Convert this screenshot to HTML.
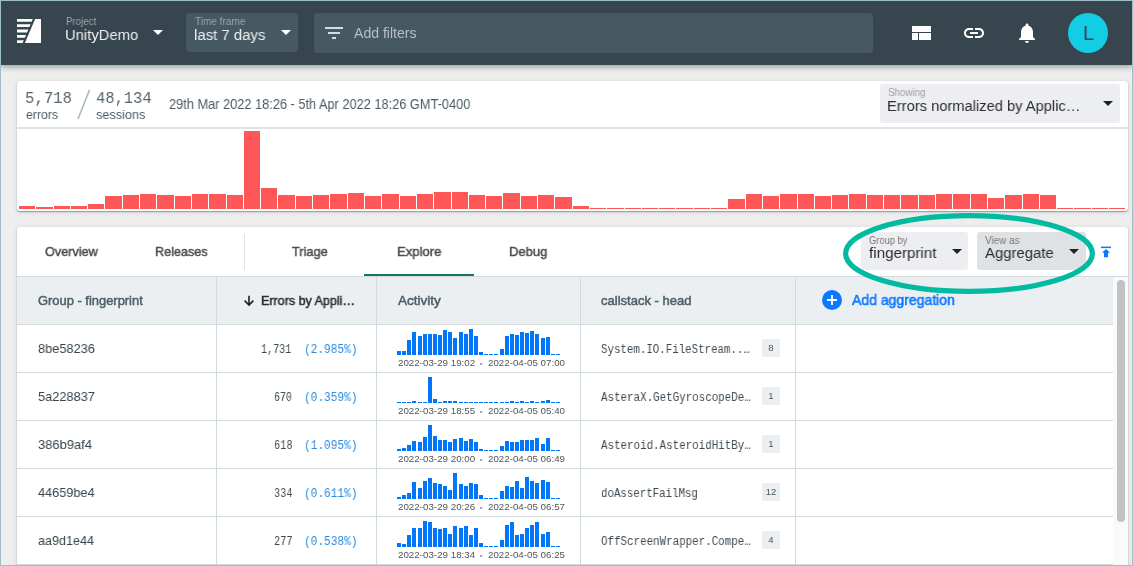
<!DOCTYPE html><html><head><meta charset="utf-8"><style>
*{margin:0;padding:0;box-sizing:border-box}
html,body{width:1133px;height:566px;overflow:hidden;background:#eeeeee;font-family:"Liberation Sans",sans-serif}
.abs{position:absolute}
.frame{position:absolute;left:0;top:0;width:1133px;height:566px;border:1px solid #9fbccb;pointer-events:none;z-index:50}
.hdr{position:absolute;left:0;top:0;width:1133px;height:65px;background:#37454e;box-shadow:0 2px 6px rgba(0,0,0,.35);z-index:5}
.hbox{position:absolute;top:13px;height:39px;background:#465862;border-radius:4px}
.tri{position:absolute;width:0;height:0;border-left:5px solid transparent;border-right:5px solid transparent;border-top:5px solid #fff}
.card{position:absolute;background:#fff;border-radius:3px;box-shadow:0 1px 1.2px rgba(0,0,0,.32),0 1px 5px rgba(0,0,0,.12)}
.t{position:absolute;white-space:nowrap;z-index:6;will-change:transform}
</style></head><body>
<div class="hdr">
<svg class="abs" style="left:17px;top:19px" width="24" height="24" viewBox="0 0 24 24" fill="#fff"><polygon points="18.1,0 24,0 24,24 7.9,24"/><polygon points="0,0 15.80,0 14.61,2.80 0,2.80"/><polygon points="0,5.3 13.55,5.3 12.36,8.10 0,8.10"/><polygon points="0,10.6 11.30,10.6 10.11,13.40 0,13.40"/><polygon points="0,15.9 9.04,15.9 7.85,18.70 0,18.70"/><polygon points="0,21.2 6.79,21.2 5.60,24.00 0,24.00"/></svg>
<div class="tri" style="left:153px;top:30px"></div>
<div class="hbox" style="left:186px;width:112px"></div>
<div class="tri" style="left:281px;top:30px"></div>
<div class="hbox" style="left:314px;width:559px;height:40px"></div>
<svg class="abs" style="left:325px;top:27px" width="18" height="12" fill="#d5dcdf"><rect x="0" y="0" width="18" height="2"/><rect x="3" y="5" width="12" height="2"/><rect x="7" y="10" width="4" height="2"/></svg>
<svg class="abs" style="left:912px;top:26px" width="19" height="14" fill="#fff"><rect x="0" y="0" width="19" height="6"/><rect x="0" y="7" width="6" height="7"/><rect x="7" y="7" width="12" height="7"/></svg>
<svg class="abs" style="left:962px;top:21px" width="24" height="24" viewBox="0 0 24 24" fill="#fff"><path d="M3.9 12c0-1.710 1.39-3.1 3.1-3.1h4V7H7c-2.76 0-5 2.24-5 5s2.24 5 5 5h4v-1.9H7c-1.71 0-3.1-1.39-3.1-3.1zM8 13h8v-2H8v2zm9-6h-4v1.9h4c1.71 0 3.1 1.39 3.1 3.1s-1.39 3.1-3.1 3.1h-4V17h4c2.76 0 5-2.24 5-5s-2.24-5-5-5z"/></svg>
<svg class="abs" style="left:1015px;top:21px" width="24" height="24" viewBox="0 0 24 24" fill="#fff"><path d="M12 22c1.1 0 2-.9 2-2h-4c0 1.1.89 2 2 2zm6-6v-5c0-3.07-1.64-5.64-4.5-6.32V4c0-.83-.67-1.5-1.5-1.5s-1.5.67-1.5 1.5v.68C7.630 5.36 6 7.92 6 11v5l-2 2v1h16v-1l-2-2z"/></svg>
<div class="abs" style="left:1068px;top:13px;width:40px;height:40px;border-radius:50%;background:#13cde5"></div>
</div>
<div class="card" style="left:17px;top:81px;width:1111px;height:130px"></div>
<div class="abs" style="left:17px;top:127px;width:1111px;height:2px;background:#e3e3e3"></div>
<svg class="abs" style="left:76px;top:89px" width="16" height="32"><line x1="13.5" y1="1" x2="2" y2="30" stroke="#a9b9c1" stroke-width="1.6"/></svg>
<div class="abs" style="left:880px;top:84px;width:240px;height:39px;background:#eceef1;border-radius:3px"></div>
<div class="tri" style="left:1103px;top:101px;border-top-color:#222"></div>
<svg class="abs" style="left:0;top:0" width="1133" height="215" fill="#ff5757"><rect x="19" y="206" width="16" height="3"/><rect x="36" y="207" width="17" height="2"/><rect x="54" y="206" width="16" height="3"/><rect x="71" y="206" width="16" height="3"/><rect x="88" y="204" width="16" height="5"/><rect x="105" y="196" width="17" height="13"/><rect x="123" y="195" width="16" height="14"/><rect x="140" y="194" width="16" height="15"/><rect x="157" y="195" width="17" height="14"/><rect x="175" y="196" width="16" height="13"/><rect x="192" y="194" width="16" height="15"/><rect x="209" y="194" width="17" height="15"/><rect x="227" y="195" width="16" height="14"/><rect x="244" y="131" width="16" height="78"/><rect x="261" y="188" width="16" height="21"/><rect x="278" y="195" width="17" height="14"/><rect x="296" y="196" width="16" height="13"/><rect x="313" y="195" width="16" height="14"/><rect x="330" y="194" width="17" height="15"/><rect x="348" y="193" width="16" height="16"/><rect x="365" y="196" width="16" height="13"/><rect x="382" y="194" width="17" height="15"/><rect x="400" y="196" width="16" height="13"/><rect x="417" y="194" width="16" height="15"/><rect x="434" y="192" width="17" height="17"/><rect x="452" y="192" width="16" height="17"/><rect x="469" y="195" width="16" height="14"/><rect x="486" y="196" width="16" height="13"/><rect x="503" y="193" width="17" height="16"/><rect x="521" y="196" width="16" height="13"/><rect x="538" y="195" width="16" height="14"/><rect x="555" y="197" width="17" height="12"/><rect x="573" y="206" width="16" height="3"/><rect x="590" y="208" width="16" height="1"/><rect x="607" y="208" width="17" height="1"/><rect x="625" y="208" width="16" height="1"/><rect x="642" y="208" width="16" height="1"/><rect x="659" y="208" width="16" height="1"/><rect x="676" y="208" width="17" height="1"/><rect x="694" y="208" width="16" height="1"/><rect x="711" y="208" width="16" height="1"/><rect x="728" y="199" width="17" height="10"/><rect x="746" y="194" width="16" height="15"/><rect x="763" y="196" width="16" height="13"/><rect x="780" y="194" width="17" height="15"/><rect x="798" y="194" width="16" height="15"/><rect x="815" y="196" width="16" height="13"/><rect x="832" y="195" width="16" height="14"/><rect x="849" y="194" width="17" height="15"/><rect x="867" y="195" width="16" height="14"/><rect x="884" y="195" width="16" height="14"/><rect x="901" y="195" width="17" height="14"/><rect x="919" y="195" width="16" height="14"/><rect x="936" y="194" width="16" height="15"/><rect x="953" y="194" width="17" height="15"/><rect x="971" y="194" width="16" height="15"/><rect x="988" y="198" width="16" height="11"/><rect x="1005" y="195" width="17" height="14"/><rect x="1023" y="194" width="16" height="15"/><rect x="1040" y="195" width="16" height="14"/><rect x="1057" y="208" width="16" height="1"/><rect x="1074" y="208" width="17" height="1"/><rect x="1092" y="208" width="16" height="1"/><rect x="1109" y="208" width="16" height="1"/></svg>
<div class="card" style="left:17px;top:227px;width:1111px;height:400px"></div>
<div class="abs" style="left:244px;top:234px;width:1px;height:36px;background:#e3e3e3"></div>
<div class="abs" style="left:364px;top:274px;width:110px;height:2px;background:#187a5c"></div>
<div class="abs" style="left:861px;top:232px;width:107px;height:38px;background:#eceef1;border-radius:3px"></div>
<div class="tri" style="left:952px;top:249px;border-top-color:#222"></div>
<div class="abs" style="left:977px;top:232px;width:109px;height:38px;background:#dfe2e5;border-radius:3px"></div>
<div class="tri" style="left:1069px;top:249px;border-top-color:#222"></div>
<svg class="abs" style="left:1100px;top:245px" width="12" height="14" viewBox="0 0 12 14" fill="#0a78ff"><rect x="1" y="1.6" width="10" height="1.5"/><polygon points="6,3.9 2,7.8 4,7.8 4,12.2 8,12.2 8,7.8 10,7.8"/></svg>
<div class="abs" style="left:17px;top:276px;width:1111px;height:1px;background:#d3dade"></div>
<div class="abs" style="left:17px;top:277px;width:1096px;height:47px;background:#eceff1"></div>
<div class="abs" style="left:1113px;top:277px;width:15px;height:290px;background:#fafafa"></div>
<div class="abs" style="left:1117px;top:280px;width:8px;height:242px;background:#c2c2c2;border-radius:4px"></div>
<div class="abs" style="left:17px;top:324px;width:1096px;height:1px;background:#d3dade"></div>
<div class="abs" style="left:17px;top:372px;width:1096px;height:1px;background:#d3dade"></div>
<div class="abs" style="left:17px;top:420px;width:1096px;height:1px;background:#d3dade"></div>
<div class="abs" style="left:17px;top:468px;width:1096px;height:1px;background:#d3dade"></div>
<div class="abs" style="left:17px;top:516px;width:1096px;height:1px;background:#d3dade"></div>
<div class="abs" style="left:17px;top:564px;width:1096px;height:1px;background:#d3dade"></div>
<div class="abs" style="left:216px;top:277px;width:1px;height:290px;background:#d3dade"></div>
<div class="abs" style="left:376px;top:277px;width:1px;height:290px;background:#d3dade"></div>
<div class="abs" style="left:580px;top:277px;width:1px;height:290px;background:#d3dade"></div>
<div class="abs" style="left:795px;top:277px;width:1px;height:290px;background:#d3dade"></div>
<svg class="abs" style="left:243px;top:294px" width="12" height="13" viewBox="0 0 12 13"><path d="M6 1.8 V11 M1.6 6.6 L6 11 L10.4 6.6" stroke="#222" stroke-width="1.6" fill="none"/></svg>
<svg class="abs" style="left:822px;top:290px" width="20" height="20" viewBox="0 0 20 20"><circle cx="10" cy="10" r="10" fill="#0a78ff"/><path d="M10 5 V15 M5 10 H15" stroke="#fff" stroke-width="1.8"/></svg>
<div class="abs" style="left:480px;top:363.3px;width:2.4px;height:1.3px;background:#a8a8a8"></div>
<div class="abs" style="left:762px;top:339px;width:18px;height:18px;background:#eceff1;font-size:9.5px;color:#4a575f;text-align:center;line-height:18px;will-change:transform">8</div>
<div class="abs" style="left:480px;top:411.3px;width:2.4px;height:1.3px;background:#a8a8a8"></div>
<div class="abs" style="left:762px;top:387px;width:18px;height:18px;background:#eceff1;font-size:9.5px;color:#4a575f;text-align:center;line-height:18px;will-change:transform">1</div>
<div class="abs" style="left:480px;top:459.3px;width:2.4px;height:1.3px;background:#a8a8a8"></div>
<div class="abs" style="left:762px;top:435px;width:18px;height:18px;background:#eceff1;font-size:9.5px;color:#4a575f;text-align:center;line-height:18px;will-change:transform">1</div>
<div class="abs" style="left:480px;top:507.3px;width:2.4px;height:1.3px;background:#a8a8a8"></div>
<div class="abs" style="left:762px;top:483px;width:18px;height:18px;background:#eceff1;font-size:9.5px;color:#4a575f;text-align:center;line-height:18px;will-change:transform">12</div>
<div class="abs" style="left:480px;top:555.3px;width:2.4px;height:1.3px;background:#a8a8a8"></div>
<div class="abs" style="left:762px;top:531px;width:18px;height:18px;background:#eceff1;font-size:9.5px;color:#4a575f;text-align:center;line-height:18px;will-change:transform">4</div>
<svg class="abs" style="left:0;top:0" width="1133" height="566" fill="#0077fa"><rect x="397" y="351" width="4" height="4"/><rect x="402" y="351" width="4" height="4"/><rect x="407" y="340" width="4" height="15"/><rect x="412" y="332" width="4" height="23"/><rect x="418" y="336" width="4" height="19"/><rect x="423" y="334" width="4" height="21"/><rect x="428" y="334" width="4" height="21"/><rect x="433" y="334" width="4" height="21"/><rect x="438" y="335" width="4" height="20"/><rect x="443" y="330" width="4" height="25"/><rect x="448" y="332" width="4" height="23"/><rect x="453" y="338" width="4" height="17"/><rect x="459" y="332" width="4" height="23"/><rect x="464" y="334" width="4" height="21"/><rect x="469" y="329" width="4" height="26"/><rect x="474" y="336" width="4" height="19"/><rect x="479" y="352" width="4" height="3"/><rect x="484" y="354" width="4" height="1"/><rect x="489" y="354" width="4" height="1"/><rect x="494" y="354" width="4" height="1"/><rect x="500" y="349" width="4" height="6"/><rect x="505" y="336" width="4" height="19"/><rect x="510" y="334" width="4" height="21"/><rect x="515" y="335" width="4" height="20"/><rect x="520" y="332" width="4" height="23"/><rect x="525" y="333" width="4" height="22"/><rect x="530" y="331" width="4" height="24"/><rect x="535" y="334" width="4" height="21"/><rect x="541" y="338" width="4" height="17"/><rect x="546" y="337" width="4" height="18"/><rect x="551" y="354" width="4" height="1"/><rect x="556" y="354" width="4" height="1"/><rect x="397" y="402" width="4" height="1"/><rect x="402" y="402" width="4" height="1"/><rect x="407" y="402" width="4" height="1"/><rect x="412" y="401" width="4" height="2"/><rect x="418" y="402" width="4" height="1"/><rect x="423" y="402" width="4" height="1"/><rect x="428" y="377" width="4" height="26"/><rect x="433" y="399" width="4" height="4"/><rect x="438" y="402" width="4" height="1"/><rect x="443" y="401" width="4" height="2"/><rect x="448" y="401" width="4" height="2"/><rect x="453" y="401" width="4" height="2"/><rect x="459" y="402" width="4" height="1"/><rect x="464" y="402" width="4" height="1"/><rect x="469" y="402" width="4" height="1"/><rect x="474" y="402" width="4" height="1"/><rect x="479" y="402" width="4" height="1"/><rect x="484" y="402" width="4" height="1"/><rect x="489" y="402" width="4" height="1"/><rect x="494" y="402" width="4" height="1"/><rect x="500" y="402" width="4" height="1"/><rect x="505" y="402" width="4" height="1"/><rect x="510" y="401" width="4" height="2"/><rect x="515" y="402" width="4" height="1"/><rect x="520" y="401" width="4" height="2"/><rect x="525" y="402" width="4" height="1"/><rect x="530" y="401" width="4" height="2"/><rect x="535" y="402" width="4" height="1"/><rect x="541" y="401" width="4" height="2"/><rect x="546" y="400" width="4" height="3"/><rect x="551" y="402" width="4" height="1"/><rect x="556" y="402" width="4" height="1"/><rect x="397" y="449" width="4" height="2"/><rect x="402" y="448" width="4" height="3"/><rect x="407" y="445" width="4" height="6"/><rect x="412" y="441" width="4" height="10"/><rect x="418" y="442" width="4" height="9"/><rect x="423" y="437" width="4" height="14"/><rect x="428" y="425" width="4" height="26"/><rect x="433" y="436" width="4" height="15"/><rect x="438" y="440" width="4" height="11"/><rect x="443" y="440" width="4" height="11"/><rect x="448" y="442" width="4" height="9"/><rect x="453" y="439" width="4" height="12"/><rect x="459" y="438" width="4" height="13"/><rect x="464" y="441" width="4" height="10"/><rect x="469" y="439" width="4" height="12"/><rect x="474" y="442" width="4" height="9"/><rect x="479" y="449" width="4" height="2"/><rect x="484" y="450" width="4" height="1"/><rect x="489" y="450" width="4" height="1"/><rect x="494" y="450" width="4" height="1"/><rect x="500" y="446" width="4" height="5"/><rect x="505" y="441" width="4" height="10"/><rect x="510" y="442" width="4" height="9"/><rect x="515" y="442" width="4" height="9"/><rect x="520" y="440" width="4" height="11"/><rect x="525" y="440" width="4" height="11"/><rect x="530" y="440" width="4" height="11"/><rect x="535" y="438" width="4" height="13"/><rect x="541" y="444" width="4" height="7"/><rect x="546" y="438" width="4" height="13"/><rect x="551" y="450" width="4" height="1"/><rect x="556" y="450" width="4" height="1"/><rect x="397" y="497" width="4" height="2"/><rect x="402" y="495" width="4" height="4"/><rect x="407" y="493" width="4" height="6"/><rect x="412" y="482" width="4" height="17"/><rect x="418" y="488" width="4" height="11"/><rect x="423" y="481" width="4" height="18"/><rect x="428" y="478" width="4" height="21"/><rect x="433" y="483" width="4" height="16"/><rect x="438" y="484" width="4" height="15"/><rect x="443" y="486" width="4" height="13"/><rect x="448" y="490" width="4" height="9"/><rect x="453" y="473" width="4" height="26"/><rect x="459" y="484" width="4" height="15"/><rect x="464" y="486" width="4" height="13"/><rect x="469" y="483" width="4" height="16"/><rect x="474" y="484" width="4" height="15"/><rect x="479" y="495" width="4" height="4"/><rect x="484" y="498" width="4" height="1"/><rect x="489" y="498" width="4" height="1"/><rect x="494" y="498" width="4" height="1"/><rect x="500" y="491" width="4" height="8"/><rect x="505" y="486" width="4" height="13"/><rect x="510" y="487" width="4" height="12"/><rect x="515" y="481" width="4" height="18"/><rect x="520" y="488" width="4" height="11"/><rect x="525" y="477" width="4" height="22"/><rect x="530" y="481" width="4" height="18"/><rect x="535" y="483" width="4" height="16"/><rect x="541" y="480" width="4" height="19"/><rect x="546" y="482" width="4" height="17"/><rect x="551" y="498" width="4" height="1"/><rect x="556" y="498" width="4" height="1"/><rect x="397" y="543" width="4" height="4"/><rect x="402" y="544" width="4" height="3"/><rect x="407" y="535" width="4" height="12"/><rect x="412" y="528" width="4" height="19"/><rect x="418" y="528" width="4" height="19"/><rect x="423" y="521" width="4" height="26"/><rect x="428" y="522" width="4" height="25"/><rect x="433" y="528" width="4" height="19"/><rect x="438" y="529" width="4" height="18"/><rect x="443" y="528" width="4" height="19"/><rect x="448" y="534" width="4" height="13"/><rect x="453" y="526" width="4" height="21"/><rect x="459" y="528" width="4" height="19"/><rect x="464" y="526" width="4" height="21"/><rect x="469" y="535" width="4" height="12"/><rect x="474" y="528" width="4" height="19"/><rect x="479" y="543" width="4" height="4"/><rect x="484" y="546" width="4" height="1"/><rect x="489" y="546" width="4" height="1"/><rect x="494" y="546" width="4" height="1"/><rect x="500" y="540" width="4" height="7"/><rect x="505" y="525" width="4" height="22"/><rect x="510" y="522" width="4" height="25"/><rect x="515" y="535" width="4" height="12"/><rect x="520" y="534" width="4" height="13"/><rect x="525" y="528" width="4" height="19"/><rect x="530" y="525" width="4" height="22"/><rect x="535" y="522" width="4" height="25"/><rect x="541" y="534" width="4" height="13"/><rect x="546" y="532" width="4" height="15"/><rect x="551" y="546" width="4" height="1"/><rect x="556" y="546" width="4" height="1"/></svg>
<div class="t" style="left:65.60px;top:17.00px;font:normal 10.3px/1 'Liberation Sans';color:#9ba5ab;transform:scaleX(0.9445);transform-origin:0 0;">Project</div>
<div class="t" style="left:64.63px;top:27.00px;font:normal 15.3px/1 'Liberation Sans';color:#eef0f1;transform:scaleX(0.9670);transform-origin:0 0;">UnityDemo</div>
<div class="t" style="left:194.50px;top:17.00px;font:normal 10.3px/1 'Liberation Sans';color:#9ba5ab;transform:scaleX(0.9739);transform-origin:0 0;">Time frame</div>
<div class="t" style="left:193.52px;top:27.00px;font:normal 15.3px/1 'Liberation Sans';color:#eef0f1;transform:scaleX(0.9769);transform-origin:0 0;">last 7 days</div>
<div class="t" style="left:354.00px;top:26.00px;font:normal 14px/1 'Liberation Sans';color:#b6c0c5;transform:scaleX(1.0040);transform-origin:0 0;">Add filters</div>
<div class="t" style="left:1083.00px;top:23.00px;font:normal 20px/1 'Liberation Sans';color:#37454e;">L</div>
<div class="t" style="left:24.78px;top:90.00px;font:normal 17px/1 'Liberation Mono';color:#56656e;transform:scaleX(0.9216);transform-origin:0 0;">5,718</div>
<div class="t" style="left:25.70px;top:108.00px;font:normal 13.5px/1 'Liberation Sans';color:#4c5b64;transform:scaleX(0.9070);transform-origin:0 0;">errors</div>
<div class="t" style="left:96.30px;top:90.00px;font:normal 17px/1 'Liberation Mono';color:#56656e;transform:scaleX(0.9097);transform-origin:0 0;">48,134</div>
<div class="t" style="left:96.30px;top:108.00px;font:normal 13.5px/1 'Liberation Sans';color:#4c5b64;transform:scaleX(0.9399);transform-origin:0 0;">sessions</div>
<div class="t" style="left:168.50px;top:97.00px;font:normal 14px/1 'Liberation Sans';color:#4c5b64;transform:scaleX(0.9130);transform-origin:0 0;">29th Mar 2022 18:26 - 5th Apr 2022 18:26 GMT-0400</div>
<div class="t" style="left:888.00px;top:88.00px;font:normal 10.3px/1 'Liberation Sans';color:#a0a0a0;transform:scaleX(0.9504);transform-origin:0 0;">Showing</div>
<div class="t" style="left:887.04px;top:98.00px;font:normal 15.3px/1 'Liberation Sans';color:#2d2d2d;transform:scaleX(0.9599);transform-origin:0 0;">Errors normalized by Applic…</div>
<div class="t" style="left:45.30px;top:245.00px;font:normal 13.5px/1 'Liberation Sans';color:#4d4d4d;-webkit-text-stroke:0.5px currentColor;transform:scaleX(0.9379);transform-origin:0 0;">Overview</div>
<div class="t" style="left:154.97px;top:245.00px;font:normal 13.5px/1 'Liberation Sans';color:#4d4d4d;-webkit-text-stroke:0.5px currentColor;transform:scaleX(0.9346);transform-origin:0 0;">Releases</div>
<div class="t" style="left:291.50px;top:245.00px;font:normal 13.5px/1 'Liberation Sans';color:#4d4d4d;-webkit-text-stroke:0.5px currentColor;transform:scaleX(0.9448);transform-origin:0 0;">Triage</div>
<div class="t" style="left:396.63px;top:245.00px;font:normal 13.5px/1 'Liberation Sans';color:#4d4d4d;-webkit-text-stroke:0.5px currentColor;transform:scaleX(0.9692);transform-origin:0 0;">Explore</div>
<div class="t" style="left:509.44px;top:245.00px;font:normal 13.5px/1 'Liberation Sans';color:#4d4d4d;-webkit-text-stroke:0.5px currentColor;transform:scaleX(0.9641);transform-origin:0 0;">Debug</div>
<div class="t" style="left:868.80px;top:236.00px;font:normal 10.3px/1 'Liberation Sans';color:#777;transform:scaleX(0.9050);transform-origin:0 0;">Group by</div>
<div class="t" style="left:868.80px;top:245.00px;font:normal 15.3px/1 'Liberation Sans';color:#2d2d2d;transform:scaleX(0.9917);transform-origin:0 0;">fingerprint</div>
<div class="t" style="left:985.00px;top:236.00px;font:normal 10.3px/1 'Liberation Sans';color:#777;transform:scaleX(0.9603);transform-origin:0 0;">View as</div>
<div class="t" style="left:985.00px;top:245.00px;font:normal 15.3px/1 'Liberation Sans';color:#2d2d2d;transform:scaleX(0.9745);transform-origin:0 0;">Aggregate</div>
<div class="t" style="left:37.60px;top:295.00px;font:normal 12.8px/1 'Liberation Sans';color:#4f5f68;-webkit-text-stroke:0.5px currentColor;transform:scaleX(1.0087);transform-origin:0 0;">Group - fingerprint</div>
<div class="t" style="left:260.62px;top:295.00px;font:normal 12.8px/1 'Liberation Sans';color:#2d2d2d;-webkit-text-stroke:0.5px currentColor;transform:scaleX(0.9777);transform-origin:0 0;">Errors by Appli…</div>
<div class="t" style="left:397.60px;top:295.00px;font:normal 12.8px/1 'Liberation Sans';color:#4f5f68;-webkit-text-stroke:0.5px currentColor;transform:scaleX(1.0576);transform-origin:0 0;">Activity</div>
<div class="t" style="left:601.40px;top:295.00px;font:normal 12.8px/1 'Liberation Sans';color:#4f5f68;-webkit-text-stroke:0.5px currentColor;transform:scaleX(1.0181);transform-origin:0 0;">callstack - head</div>
<div class="t" style="left:852.30px;top:293.00px;font:normal 14.3px/1 'Liberation Sans';color:#0a78ff;-webkit-text-stroke:0.5px currentColor;transform:scaleX(0.9802);transform-origin:0 0;">Add aggregation</div>
<div class="t" style="left:37.80px;top:342.00px;font:normal 13.5px/1 'Liberation Sans';color:#37444c;transform:scaleX(0.9487);transform-origin:0 0;">8be58236</div>
<div class="t" style="left:304.14px;top:344.00px;font:normal 12px/1 'Liberation Mono';color:#2a8ae0;transform:scaleX(0.9282);transform-origin:0 0;">(2.985%)</div>
<div class="t" style="left:261.30px;top:344.00px;font:normal 12px/1 'Liberation Mono';color:#3d4a52;transform:scaleX(0.8407);transform-origin:0 0;">1,731</div>
<div class="t" style="left:397.50px;top:359.00px;font:normal 9.3px/1 'Liberation Sans';color:#50575c;transform:scaleX(1.0514);transform-origin:0 0;">2022-03-29 19:02</div>
<div class="t" style="left:488.10px;top:359.00px;font:normal 9.3px/1 'Liberation Sans';color:#50575c;transform:scaleX(1.0487);transform-origin:0 0;">2022-04-05 07:00</div>
<div class="t" style="left:601.40px;top:344.00px;font:normal 12px/1 'Liberation Mono';color:#3d4a52;transform:scaleX(0.8989);transform-origin:0 0;">System.IO.FileStream..…</div>
<div class="t" style="left:37.80px;top:390.00px;font:normal 13.5px/1 'Liberation Sans';color:#37444c;transform:scaleX(0.9487);transform-origin:0 0;">5a228837</div>
<div class="t" style="left:304.14px;top:392.00px;font:normal 12px/1 'Liberation Mono';color:#2a8ae0;transform:scaleX(0.9282);transform-origin:0 0;">(0.359%)</div>
<div class="t" style="left:273.90px;top:392.00px;font:normal 12px/1 'Liberation Mono';color:#3d4a52;transform:scaleX(0.8223);transform-origin:0 0;">670</div>
<div class="t" style="left:397.50px;top:407.00px;font:normal 9.3px/1 'Liberation Sans';color:#50575c;transform:scaleX(1.0514);transform-origin:0 0;">2022-03-29 18:55</div>
<div class="t" style="left:488.10px;top:407.00px;font:normal 9.3px/1 'Liberation Sans';color:#50575c;transform:scaleX(1.0487);transform-origin:0 0;">2022-04-05 05:40</div>
<div class="t" style="left:601.40px;top:392.00px;font:normal 12px/1 'Liberation Mono';color:#3d4a52;transform:scaleX(0.9043);transform-origin:0 0;">AsteraX.GetGyroscopeDe…</div>
<div class="t" style="left:37.80px;top:438.00px;font:normal 13.5px/1 'Liberation Sans';color:#37444c;transform:scaleX(0.9595);transform-origin:0 0;">386b9af4</div>
<div class="t" style="left:304.14px;top:440.00px;font:normal 12px/1 'Liberation Mono';color:#2a8ae0;transform:scaleX(0.9282);transform-origin:0 0;">(1.095%)</div>
<div class="t" style="left:273.70px;top:440.00px;font:normal 12px/1 'Liberation Mono';color:#3d4a52;transform:scaleX(0.8550);transform-origin:0 0;">618</div>
<div class="t" style="left:397.50px;top:455.00px;font:normal 9.3px/1 'Liberation Sans';color:#50575c;transform:scaleX(1.0514);transform-origin:0 0;">2022-03-29 20:00</div>
<div class="t" style="left:488.10px;top:455.00px;font:normal 9.3px/1 'Liberation Sans';color:#50575c;transform:scaleX(1.0487);transform-origin:0 0;">2022-04-05 06:49</div>
<div class="t" style="left:601.40px;top:440.00px;font:normal 12px/1 'Liberation Mono';color:#3d4a52;transform:scaleX(0.9043);transform-origin:0 0;">Asteroid.AsteroidHitBy…</div>
<div class="t" style="left:37.80px;top:486.00px;font:normal 13.5px/1 'Liberation Sans';color:#37444c;transform:scaleX(0.9429);transform-origin:0 0;">44659be4</div>
<div class="t" style="left:304.14px;top:488.00px;font:normal 12px/1 'Liberation Mono';color:#2a8ae0;transform:scaleX(0.9282);transform-origin:0 0;">(0.611%)</div>
<div class="t" style="left:273.70px;top:488.00px;font:normal 12px/1 'Liberation Mono';color:#3d4a52;transform:scaleX(0.8550);transform-origin:0 0;">334</div>
<div class="t" style="left:397.50px;top:503.00px;font:normal 9.3px/1 'Liberation Sans';color:#50575c;transform:scaleX(1.0514);transform-origin:0 0;">2022-03-29 20:26</div>
<div class="t" style="left:488.10px;top:503.00px;font:normal 9.3px/1 'Liberation Sans';color:#50575c;transform:scaleX(1.0487);transform-origin:0 0;">2022-04-05 06:57</div>
<div class="t" style="left:601.40px;top:488.00px;font:normal 12px/1 'Liberation Mono';color:#3d4a52;transform:scaleX(0.8969);transform-origin:0 0;">doAssertFailMsg</div>
<div class="t" style="left:37.80px;top:534.00px;font:normal 13.5px/1 'Liberation Sans';color:#37444c;transform:scaleX(0.9330);transform-origin:0 0;">aa9d1e44</div>
<div class="t" style="left:304.14px;top:536.00px;font:normal 12px/1 'Liberation Mono';color:#2a8ae0;transform:scaleX(0.9282);transform-origin:0 0;">(0.538%)</div>
<div class="t" style="left:273.70px;top:536.00px;font:normal 12px/1 'Liberation Mono';color:#3d4a52;transform:scaleX(0.8550);transform-origin:0 0;">277</div>
<div class="t" style="left:397.50px;top:551.00px;font:normal 9.3px/1 'Liberation Sans';color:#50575c;transform:scaleX(1.0514);transform-origin:0 0;">2022-03-29 18:34</div>
<div class="t" style="left:488.10px;top:551.00px;font:normal 9.3px/1 'Liberation Sans';color:#50575c;transform:scaleX(1.0487);transform-origin:0 0;">2022-04-05 06:25</div>
<div class="t" style="left:601.40px;top:536.00px;font:normal 12px/1 'Liberation Mono';color:#3d4a52;transform:scaleX(0.9043);transform-origin:0 0;">OffScreenWrapper.Compe…</div>
<svg class="abs" style="left:0;top:0;z-index:10" width="1133" height="566"><ellipse cx="969" cy="253.5" rx="123.4" ry="37.9" fill="none" stroke="#02baa0" stroke-width="5.2"/></svg>
<div class="frame"></div>
</body></html>
